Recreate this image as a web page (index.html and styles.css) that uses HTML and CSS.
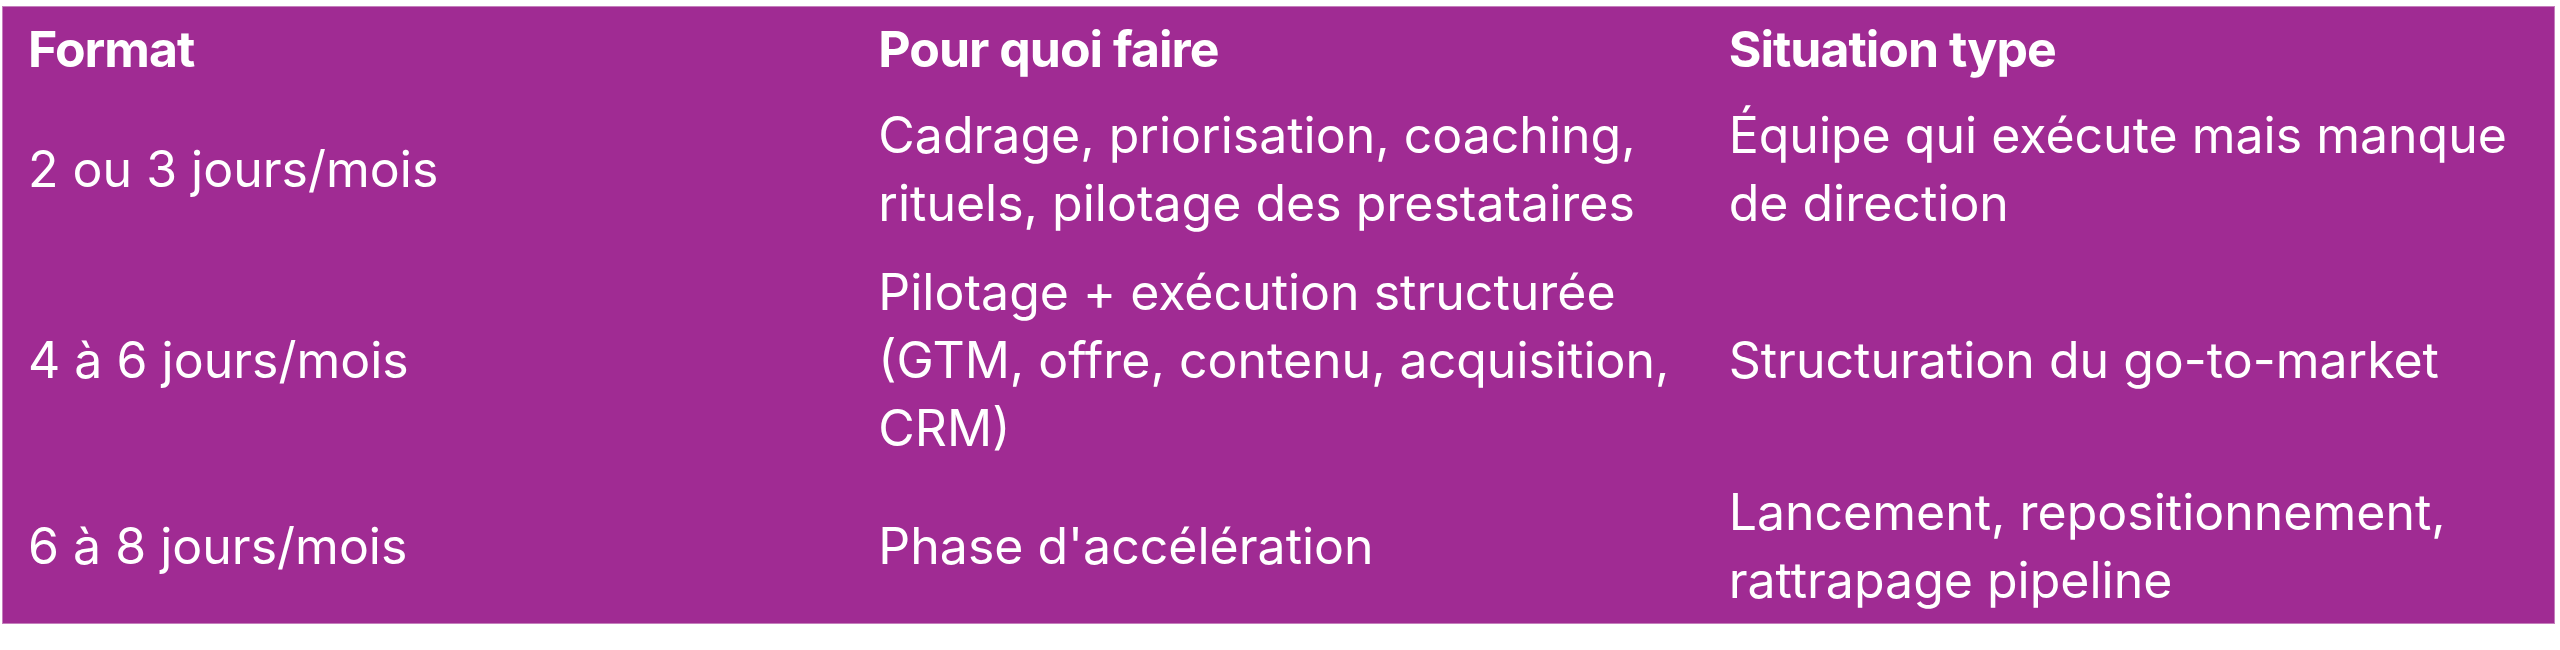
FILE: index.html
```html
<!DOCTYPE html>
<html lang="fr">
<head>
<meta charset="utf-8">
<link rel="stylesheet" href="styles.css">
</head>
<body>
<div class="table">
  <div class="row head">
    <div class="cell">Format</div>
    <div class="cell">Pour quoi faire</div>
    <div class="cell">Situation type</div>
  </div>
  <div class="row r1">
    <div class="cell">2 ou 3 jours/mois</div>
    <div class="cell">Cadrage, priorisation, coaching,<br>rituels, pilotage des prestataires</div>
    <div class="cell">Équipe qui exécute mais manque<br>de direction</div>
  </div>
  <div class="row r2">
    <div class="cell">4 à 6 jours/mois</div>
    <div class="cell">Pilotage + exécution structurée<br>(GTM, offre, contenu, acquisition,<br>CRM)</div>
    <div class="cell">Structuration du go-to-market</div>
  </div>
  <div class="row r3">
    <div class="cell">6 à 8 jours/mois</div>
    <div class="cell">Phase d'accélération</div>
    <div class="cell">Lancement, repositionnement,<br>rattrapage pipeline</div>
  </div>
</div>
</body>
</html>
```

FILE: styles.css
```css
html, body {
  margin: 0;
  background: #ffffff;
}
body {
  padding: 6px 5px 0 2px;
  font-family: "Inter", "Liberation Sans", Arial, sans-serif;
}
.table {
  width: 2553px;
  box-sizing: border-box;
  background: #a02b93;
  border: 1px solid #c57fbd;
  color: #ffffff;
}
.row {
  display: grid;
  grid-template-columns: 1fr 1fr 1fr;
  align-items: center;
}
.cell {
  padding: 9px 25px 10px 25px;
  font-size: 50px;
  line-height: 68px;
  white-space: nowrap;
}
.head .cell {
  font-weight: 700;
  letter-spacing: -1px;
  padding-top: 8px;
  padding-bottom: 9px;
}
.r2 .cell { padding-top: 11px; padding-bottom: 8px; }
.r3 .cell { padding-top: 8px; padding-bottom: 9px; }
```
